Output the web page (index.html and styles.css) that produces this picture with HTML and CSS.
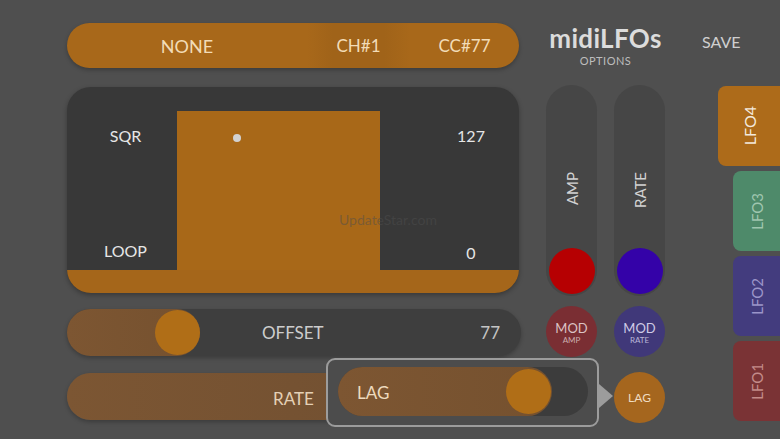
FILE: index.html
```html
<!DOCTYPE html>
<html>
<head>
<meta charset="utf-8">
<link rel="stylesheet" href="styles.css">
</head>
<body>
<div class="app">
  <div class="main">
    <div class="topbar">
      <div class="seg seg-name">NONE</div>
      <div class="seg seg-ch">CH#1</div>
      <div class="seg seg-cc">CC#77</div>
    </div>

    <div class="scope">
      <div class="scope-labels left">
        <span>SQR</span>
        <span>LOOP</span>
      </div>
      <div class="wave">
        <span class="dot"></span>
      </div>
      <div class="scope-labels right">
        <span>127</span>
        <span>0</span>
      </div>
      <div class="scope-strip"></div>
      <span class="watermark">UpdateStar.com</span>
    </div>

    <div class="slider offset">
      <div class="fill offset-fill"><span class="knob"></span></div>
      <span class="slider-label offset-label">OFFSET</span>
      <span class="slider-value">77</span>
    </div>

    <div class="rate-row">
      <div class="slider rate">
        <span class="slider-label rate-label">RATE</span>
      </div>
      <div class="popup">
        <div class="slider lag">
          <div class="fill lag-fill">
            <span class="slider-label lag-label">LAG</span>
            <span class="knob"></span>
          </div>
        </div>
      </div>
    </div>
  </div>

  <div class="controls">
    <div class="title">
      <div class="logo">midiLFOs</div>
      <div class="options">OPTIONS</div>
    </div>
    <div class="vsliders">
      <div class="vslider">
        <span class="vlabel">AMP</span>
        <span class="ball red"></span>
      </div>
      <div class="vslider">
        <span class="vlabel">RATE</span>
        <span class="ball blue"></span>
      </div>
    </div>
    <div class="mods">
      <div class="mod mod-amp"><span class="mod-main">MOD</span><span class="mod-sub">AMP</span></div>
      <div class="mod mod-rate"><span class="mod-main">MOD</span><span class="mod-sub">RATE</span></div>
    </div>
    <div class="lagrow">
      <div class="lagbtn">LAG</div>
    </div>
  </div>

  <div class="side">
    <div class="save">SAVE</div>
    <div class="tabs">
      <div class="tab lfo4 active"><span>LFO4</span></div>
      <div class="tab lfo3"><span>LFO3</span></div>
      <div class="tab lfo2"><span>LFO2</span></div>
      <div class="tab lfo1"><span>LFO1</span></div>
    </div>
  </div>
</div>
</body>
</html>
```

FILE: styles.css
```css
* { box-sizing: border-box; }
html, body { margin: 0; padding: 0; }
body {
  width: 780px;
  height: 439px;
  overflow: hidden;
  background: #4f4f4f;
  font-family: "Lato", "Open Sans", sans-serif;
}
.app {
  display: flex;
  height: 439px;
}

/* ---------- main column ---------- */
.main {
  width: 454px;
  margin-left: 67px;
  padding-top: 23px;
  display: flex;
  flex-direction: column;
}
.topbar {
  width: 452px;
  height: 45px;
  border-radius: 23px;
  background: #a8681a;
  display: flex;
  overflow: hidden;
  box-shadow: 0 2px 4px rgba(0,0,0,0.25);
}
.seg {
  display: flex;
  align-items: center;
  justify-content: center;
  color: #f2dcb7;
  font-size: 17px;
}
.seg-name { width: 240px; font-size: 18px; }
.seg-ch { width: 103px; background: linear-gradient(90deg, #a8681a, #a06319 25%, #a06319 75%, #a8681a); }
.seg-cc { flex: 1; }

.scope {
  position: relative;
  width: 452px;
  height: 206px;
  margin-top: 19px;
  border-radius: 24px;
  background: #383838;
  overflow: hidden;
  padding-top: 24px;
  display: grid;
  grid-template-columns: 110px 203px 1fr;
  grid-template-rows: 1fr 23px;
  box-shadow: 0 2px 5px rgba(0,0,0,0.3);
}
.scope-labels {
  display: flex;
  flex-direction: column;
  justify-content: space-between;
  align-items: center;
  color: #e6e6e6;
  font-size: 16px;
  line-height: 18px;
}
.scope-labels.left { padding: 16px 0 10px 7px; }
.scope-labels.right { padding: 16px 0 8px 43px; }
.wave {
  position: relative;
  background: #a86818;
}
.dot {
  position: absolute;
  left: 56px;
  top: 23px;
  width: 8px;
  height: 8px;
  border-radius: 50%;
  background: #d2d2d2;
}
.scope-strip {
  grid-column: 1 / 4;
  background: #a5661a;
}
.watermark {
  position: absolute;
  left: 272px;
  top: 124px;
  font-size: 14px;
  color: rgba(78,78,78,0.5);
}

/* ---------- sliders ---------- */
.slider {
  height: 47px;
  border-radius: 24px;
  display: flex;
  align-items: center;
}
.offset {
  margin-top: 16px;
  width: 454px;
  background: #3e3e3e;
  box-shadow: 0 2px 4px rgba(0,0,0,0.25);
}
.fill {
  height: 100%;
  border-radius: 24px;
  display: flex;
  align-items: center;
  justify-content: flex-end;
  background: linear-gradient(90deg, #7d5632, #75512f);
}
.offset-fill { width: 133px; }
.knob {
  width: 45px;
  height: 45px;
  border-radius: 50%;
  background: #b06e17;
  flex: none;
}
.slider-label {
  font-size: 17px;
  color: #cdcdcd;
}
.offset-label { margin-left: 62px; }
.slider-value {
  margin-left: auto;
  margin-right: 21px;
  font-size: 17px;
  color: #c4c4c4;
}

.rate-row {
  position: relative;
  margin-top: 17px;
}
.rate {
  width: 454px;
  background: linear-gradient(90deg, #7c5633, #6e4e31);
  box-shadow: 0 2px 4px rgba(0,0,0,0.25);
}
.rate-label {
  margin-left: 206px;
  margin-top: 3px;
  color: #e4d0b6;
}

.popup {
  position: absolute;
  left: 259px;
  top: -15px;
  width: 273px;
  height: 69px;
  border: 2px solid #9c9c9c;
  border-radius: 9px;
  background: #4c4c4c;
  padding: 7px 9px 8px 10px;
}
.popup::after {
  content: "";
  position: absolute;
  right: -16px;
  top: 24px;
  border-left: 14px solid #9c9c9c;
  border-top: 12px solid transparent;
  border-bottom: 12px solid transparent;
}
.lag {
  height: 49px;
  border-radius: 25px;
  background: #3c3c3c;
}
.lag-fill {
  width: 214px;
  border-radius: 25px;
  justify-content: space-between;
}
.lag-label {
  margin-left: 19px;
  margin-top: 2px;
  color: #eedbbf;
}
.lag-fill .knob { margin-right: 1px; }

/* ---------- controls column ---------- */
.controls {
  width: 119px;
  margin-left: 25px;
  display: flex;
  flex-direction: column;
}
.title {
  height: 85px;
  padding-top: 23px;
  text-align: center;
}
.logo {
  font-size: 26px;
  font-weight: 700;
  line-height: 31px;
  color: #dcdcdc;
  letter-spacing: 0.3px;
}
.options {
  font-size: 11px;
  line-height: 12px;
  color: #bdbdbd;
  letter-spacing: 0.5px;
  margin-top: 1px;
}
.vsliders {
  display: flex;
  gap: 17px;
}
.vslider {
  width: 51px;
  height: 211px;
  border-radius: 26px;
  background: #464646;
  display: flex;
  flex-direction: column;
  align-items: center;
  padding-top: 87px;
  padding-bottom: 2px;
}
.vlabel {
  writing-mode: vertical-rl;
  transform: rotate(180deg);
  font-size: 15px;
  color: #d2d2d2;
}
.ball {
  margin-top: auto;
  width: 46px;
  height: 46px;
  border-radius: 50%;
}
.red { background: #b60002; }
.blue { background: #3402a8; }

.mods {
  display: flex;
  gap: 17px;
  margin-top: 10px;
}
.mod {
  width: 51px;
  height: 51px;
  border-radius: 50%;
  display: flex;
  flex-direction: column;
  align-items: center;
  justify-content: center;
  padding-top: 2px;
}
.mod-amp { background: #7a2e33; color: #dcc3c4; }
.mod-rate { background: #403879; color: #cfcbe6; }
.mod-main { font-size: 13px; line-height: 14px; }
.mod-sub { font-size: 8px; line-height: 10px; opacity: 0.85; }

.lagrow {
  margin-top: 15px;
  padding-left: 68px;
}
.lagbtn {
  width: 51px;
  height: 51px;
  border-radius: 50%;
  background: #a5661e;
  color: #efdcc2;
  font-size: 12px;
  display: flex;
  align-items: center;
  justify-content: center;
}

/* ---------- side ---------- */
.side {
  flex: 1;
  display: flex;
  flex-direction: column;
}
.save {
  padding-left: 37px;
  padding-top: 33px;
  height: 86px;
  font-size: 16px;
  line-height: 18px;
  color: #cfcfcf;
}
.tabs {
  display: flex;
  flex-direction: column;
  align-items: flex-end;
  gap: 5px;
}
.tab {
  width: 47px;
  height: 80px;
  border-radius: 8px 0 0 8px;
  display: flex;
  align-items: center;
  justify-content: center;
}
.tab span {
  writing-mode: vertical-rl;
  transform: rotate(180deg);
  font-size: 15px;
}
.lfo4 { width: 62px; background: #ad6b1a; }
.lfo4 span { color: #f3e9dc; font-size: 16px; }
.lfo3 { background: #4e8a6a; }
.lfo3 span { color: #9fc6af; }
.lfo2 { background: #433c7e; }
.lfo2 span { color: #9b95c9; }
.lfo1 { height: 80px; background: #7a3335; }
.lfo1 span { color: #c38b89; }
```
